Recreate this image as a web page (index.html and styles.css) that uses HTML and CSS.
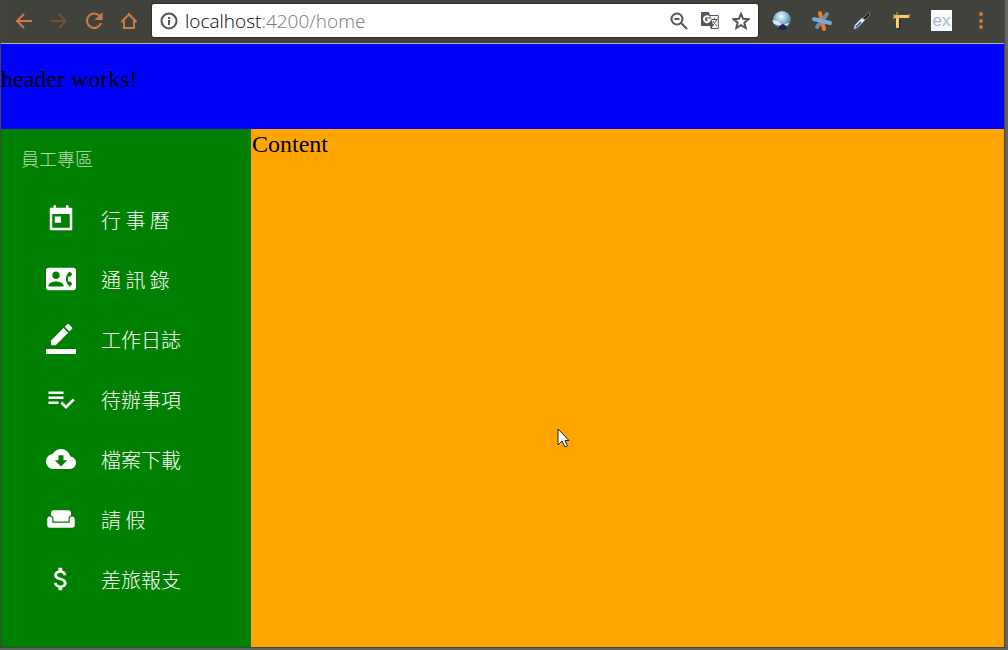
FILE: index.html
```html
<!DOCTYPE html>
<html lang="zh-Hant">
<head>
<meta charset="utf-8">
<meta name="viewport" content="width=device-width, initial-scale=1">
<title>Home</title>
<link rel="stylesheet" href="styles.css">
</head>
<body>
<div class="window">
  <div class="toolbar">
    <div class="nav-buttons">
      <button class="tool" type="button" aria-label="Back"><svg viewBox="0 0 18 18"><path d="M17 9H2M9 2L2 9l7 7"/></svg></button>
      <button class="tool tool-off" type="button" aria-label="Forward"><svg viewBox="0 0 18 18"><path d="M1 9h15M9 2l7 7-7 7"/></svg></button>
      <button class="tool" type="button" aria-label="Reload"><svg viewBox="0 0 18 18"><path d="M14.500 4A7.200 7.200 0 1 0 16 11"/><path class="solid" d="M17.500 0v8h-8z"/></svg></button>
      <button class="tool" type="button" aria-label="Home"><svg viewBox="0 0 18 18"><path d="M1.500 10L9 2.200l7.500 7.800M4 8.500V16h10V8.500"/></svg></button>
    </div>
    <div class="address">
      <svg class="glyph" viewBox="0 0 18 18"><circle cx="9" cy="9" r="7.500"/><path d="M9 8v5M9 5v2"/></svg>
      <div class="url" role="textbox" aria-label="Address" contenteditable="true" spellcheck="false">localhost<span class="url-path">:4200/home</span></div>
      <button class="action" type="button" aria-label="Zoom"><svg class="glyph" viewBox="0 0 18 18"><circle cx="7" cy="7" r="5.500"/><path d="M11 11l6 6M4.500 7h5"/></svg></button>
      <button class="action" type="button" aria-label="Translate"><svg class="glyph glyph-thin" viewBox="0 0 18 18"><path d="M8 3.500h9.300V16.500H10"/><path class="fill" d="M1 0h7l4.500 14H1a1 1 0 0 1-1-1V1a1 1 0 0 1 1-1zM9 14h3l-2 3.500z"/><path class="knock" d="M8.300 5.200a3 3 0 1 0 .7 2.300H6"/><path d="M10.500 7.500h6M13.500 6v1.500M15.500 7.500c-.5 2.500-2 4.500-3.500 5.500M12 9c.5 1.500 2 3.500 4 4.500"/></svg></button>
      <button class="action" type="button" aria-label="Bookmark"><svg class="glyph" viewBox="0 0 18 18"><path d="M9 1.800l2.100 5 5.400.4-4.100 3.500 1.300 5.300L9 13.200 4.300 16l1.300-5.300-4.100-3.500 5.400-.4z"/></svg></button>
    </div>
    <div class="extensions">
      <button class="ext" type="button" aria-label="Globe"><svg viewBox="0 0 22 22"><defs><radialGradient id="globe" cx=".45" cy=".3" r=".7"><stop offset="0" stop-color="#f2fbff"/><stop offset=".5" stop-color="#8bb9d6"/><stop offset="1" stop-color="#285481"/></radialGradient></defs><path fill="#181848" d="M4 14h14l-3 5-4 1-5-2z"/><circle cx="11" cy="10" r="9" fill="url(#globe)"/><path fill="#dfe9ee" d="M1 10l6 1 4 4-2 1-6-2zM13 14l5-1-2 3z"/><path fill="#24234f" d="M8 16l4-2 4 3-4 3-4-1z"/></svg></button>
      <button class="ext" type="button" aria-label="Asterisk"><svg viewBox="0 0 22 22"><g fill="none" stroke-width="4" stroke-linecap="round"><path stroke="#e87f28" d="M9 3l4 16"/><path stroke="#85869a" d="M16 4L6 17"/><path stroke="#75a9d8" d="M3 9l16 4"/></g></svg></button>
      <button class="ext" type="button" aria-label="Color picker"><svg viewBox="0 0 22 22"><path d="M11 9l7-7 1 3-6 6z" fill="#1f2020" stroke="#777"/><path d="M3 19l1-4 7-7 3 2-7 7z" fill="#e7f1fb" stroke="#9ea9b5"/><path d="M5 17l5-5" stroke="#1449c6" stroke-width="1.500"/></svg></button>
      <button class="ext" type="button" aria-label="Ruler"><svg viewBox="0 0 22 22"><path d="M3 5h15v3H8v10H5V8H3z" fill="#f3bd60"/><path d="M6 2v4M18 4v4M3 4v5" stroke="#e7a840"/><path d="M9 10v9H6" stroke="#26221b" fill="none"/><path d="M9 6h8M6 9v8" stroke="#ffe3a0"/></svg></button>
      <button class="ext ext-label" type="button">ex</button>
      <button class="ext menu" type="button" aria-label="Menu"><svg viewBox="0 0 22 22"><circle cx="11" cy="4" r="2"/><circle cx="11" cy="11" r="2"/><circle cx="11" cy="17" r="2"/></svg></button>
    </div>
  </div>
  <header class="header"><p>header works!</p></header>
  <div class="page">
    <nav class="sidebar" aria-labelledby="staff">
      <h2 class="heading" id="staff">員工專區</h2>
      <ul class="menu-list">
        <li><a href="#calendar"><svg viewBox="0 0 24 24"><path d="M20.500 3H18V1h-2v2H8V1H6v2H3.500L3 3.500v17l.5.5h17l.5-.5v-17zM19 19H5V8h14v11zM7 10h5v5H7z"/></svg>行 事 曆</a></li>
        <li><a href="#contacts"><svg viewBox="0 0 24 24"><path d="M22 3H2C.9 3 0 3.900 0 5v14c0 1.100.9 2 2 2h20c1.100 0 1.990-.9 1.990-2L24 5c0-1.100-.9-2-2-2zM8 6c1.660 0 3 1.340 3 3s-1.340 3-3 3-3-1.340-3-3 1.340-3 3-3zm6 12H2v-1c0-2 4-3.100 6-3.100s6 1.100 6 3.100v1zm3.850-4h1.640L21 16l-1.990 1.990c-1.310-.98-2.280-2.380-2.730-3.990-.18-.64-.28-1.310-.28-2s.1-1.360.28-2c.45-1.620 1.420-3.010 2.730-3.990L21 8l-1.510 2h-1.640c-.22.630-.35 1.300-.35 2s.13 1.370.35 2z"/></svg>通 訊 錄</a></li>
        <li><a href="#worklog"><svg viewBox="0 0 24 24"><path d="M17.750 7L14 3.250l-10 10V17h3.750l10-10zm2.960-2.960a.996.996 0 0 0 0-1.410L18.370.29a.996.996 0 0 0-1.410 0L15 2.250 18.750 6l1.960-1.960zM0 20h24v4H0z"/></svg>工作日誌</a></li>
        <li><a href="#todo"><svg viewBox="0 0 24 24"><path d="M14 10H2v2h12v-2zm0-4H2v2h12V6zM2 16h8v-2H2v2zm19.500-4.500L23 13l-6.990 7-4.510-4.500L13 14l3.010 3 5.490-5.500z"/></svg>待辦事項</a></li>
        <li><a href="#downloads"><svg viewBox="0 0 24 24"><path d="M19.350 10.040C18.670 6.590 15.640 4 12 4 9.110 4 6.600 5.640 5.350 8.040 2.340 8.360 0 10.910 0 14c0 3.310 2.690 6 6 6h13c2.760 0 5-2.240 5-5 0-2.640-2.050-4.780-4.650-4.960zM17 13l-5 5-5-5h3V9h4v4h3z"/></svg>檔案下載</a></li>
        <li><a href="#leave"><svg viewBox="0 0 24 24"><path d="M21 10c-1.100 0-2 .9-2 2v3H5v-3c0-1.100-.9-2-2-2s-2 .9-2 2v5c0 1.100.9 2 2 2h18c1.100 0 2-.9 2-2v-5c0-1.100-.9-2-2-2zm-3-5H6c-1.100 0-2 .9-2 2v2.150c1.160.41 2 1.510 2 2.820V14h12v-2.030c0-1.300.84-2.400 2-2.820V7c0-1.100-.9-2-2-2z"/></svg>請 假</a></li>
        <li><a href="#travel"><svg viewBox="0 0 24 24"><path d="M11.800 10.900c-2.270-.59-3-1.200-3-2.150 0-1.090 1.010-1.850 2.700-1.850 1.780 0 2.440.85 2.500 2.100h2.210c-.07-1.720-1.120-3.300-3.210-3.810V3h-3v2.160c-1.940.42-3.500 1.680-3.500 3.610 0 2.310 1.910 3.460 4.700 4.130 2.500.6 3 1.480 3 2.410 0 .69-.49 1.790-2.700 1.790-2.060 0-2.870-.92-2.980-2.100h-2.200c.12 2.190 1.760 3.420 3.680 3.830V21h3v-2.150c1.950-.37 3.500-1.500 3.500-3.550 0-2.840-2.430-3.810-4.700-4.400z"/></svg>差旅報支</a></li>
      </ul>
    </nav>
    <main class="content">Content
      <svg class="cursor" viewBox="0 0 13 21"><path d="M1 1v16l4-4 3 6 2.500-1-2.500-5.500h4z"/></svg>
    </main>
  </div>
</div>
</body>
</html>
```
FILE: styles.css
```css
* { box-sizing: border-box; }

body {
  margin: 0;
  background: #636363;
  font-family: "Liberation Serif", "Noto Sans CJK TC", serif;
}

button {
  margin: 0;
  padding: 0;
  border: 0;
  background: none;
  flex: none;
}

svg { display: block; flex: none; }

.window {
  display: flex;
  flex-direction: column;
  min-height: calc(100vh - 2px);
  margin-right: 3px;
  border: 1px solid #444;
  border-top: 0;
}

.toolbar {
  display: flex;
  align-items: center;
  height: 44px;
  padding: 0 12px 2px 14px;
  border-bottom: 1px solid #b5b5b5;
  background: #42423c;
}

.nav-buttons { display: flex; gap: 17px; margin-right: 14px; }

.tool svg {
  width: 18px;
  height: 18px;
  fill: none;
  stroke: #c97b43;
  stroke-width: 2;
}

.tool .solid { fill: #c97b43; stroke: none; }
.tool-off svg { stroke: #765139; }

.address {
  display: flex;
  align-items: center;
  flex: 1;
  height: 33px;
  padding: 0 8px;
  border-radius: 2px;
  background: #fff;
  box-shadow: 0 0 1px 1px #30302b;
}

.glyph {
  width: 18px;
  height: 18px;
  fill: none;
  stroke: #555559;
  stroke-width: 2;
}

.glyph-thin { stroke-width: 1; }
.glyph .fill { fill: #555559; stroke: none; }
.glyph .knock { stroke: #fff; stroke-width: 2; }

.url {
  flex: 1;
  margin-left: 7px;
  outline: 0;
  font: 300 19px/28px "Open Sans", sans-serif;
  color: #000;
}

.url-path { color: #777; }
.action { margin-left: 13px; }

.extensions { display: flex; align-items: center; gap: 18px; margin-left: 13px; }
.ext svg { width: 22px; height: 22px; fill: none; }

.ext-label {
  width: 21px;
  height: 21px;
  background: #f9fafc;
  color: #a5b5c4;
  font: 17px/18px "Liberation Sans", sans-serif;
}

.menu svg { fill: #c97b43; }

.header {
  height: 85px;
  background: #00f;
  color: #000;
  font-size: 24px;
  line-height: 28px;
}

.header p { margin: 0; padding-top: 21px; }
.page { display: flex; flex: 1; }

.sidebar {
  width: 250px;
  flex: none;
  padding-top: 15px;
  background: #008000;
  font-family: "Noto Sans CJK TC", sans-serif;
  font-weight: 300;
}

.heading {
  margin: 0;
  padding-left: 20px;
  color: #bfdcb8;
  font-size: 18px;
  font-weight: 300;
  line-height: 28px;
}

.menu-list { margin: 0; padding: 17px 0 0; list-style: none; }

.menu-list a {
  display: flex;
  align-items: center;
  gap: 25px;
  height: 60px;
  padding-left: 45px;
  color: #fff;
  font-size: 20px;
  text-decoration: none;
}

.menu-list svg { width: 30px; height: 30px; fill: #fff; }

.content {
  position: relative;
  flex: 1;
  padding-left: 1px;
  background: #ffa500;
  color: #000;
  font-size: 24px;
  line-height: 30px;
}

.cursor {
  position: absolute;
  left: 306px;
  top: 299px;
  width: 13px;
  height: 21px;
  fill: #fff;
  stroke: #222;
}
```
